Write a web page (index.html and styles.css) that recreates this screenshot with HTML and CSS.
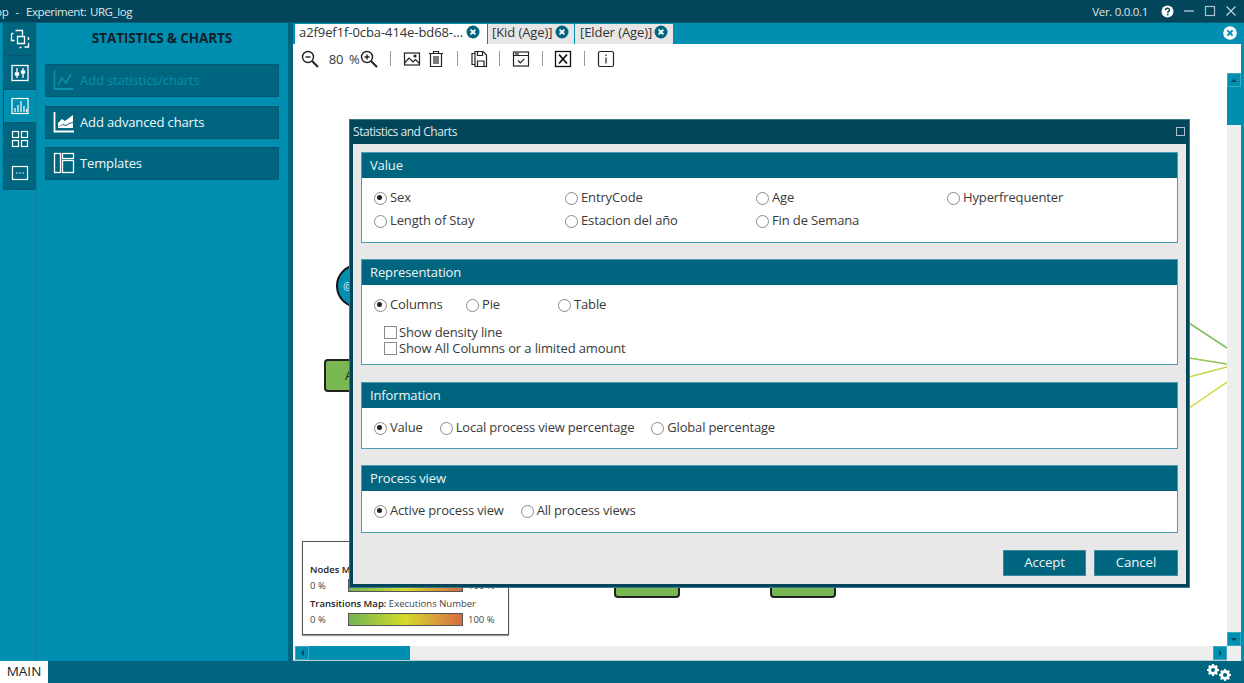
FILE: index.html
```html
<!DOCTYPE html>
<html lang="en">
<head>
<meta charset="utf-8">
<title>Statistics and Charts</title>
<link rel="stylesheet" href="styles.css">
</head>
<body>
<div class="app">
  <header class="titlebar">
    <div class="app-title">pp&nbsp; -&nbsp; Experiment: URG_log</div>
    <div class="win-tools">
      <span class="version">Ver. 0.0.0.1</span>
      <svg class="help" width="13" height="13" viewBox="0 0 13 13"><circle cx="6.5" cy="6.5" r="6" fill="#fff"/><path d="M4.6 5.2c0-2.5 3.9-2.4 3.9-.2 0 1.500-1.800 1.400-1.800 2.900" fill="none" stroke="#03455a" stroke-width="1.500"/><rect x="5.900" y="8.800" width="1.600" height="1.600" fill="#03455a"/></svg>
      <svg width="12" height="12" viewBox="0 0 12 12"><path d="M1 6h10" stroke="#c4d4da" stroke-width="1.200"/></svg>
      <svg width="12" height="12" viewBox="0 0 12 12"><rect x="1.500" y="1.500" width="9" height="9" fill="none" stroke="#a9c2cb" stroke-width="1.200"/></svg>
      <svg width="12" height="12" viewBox="0 0 12 12"><path d="M1.500 1.500l9 9M10.500 1.500l-9 9" stroke="#c4d4da" stroke-width="1.200"/></svg>
    </div>
  </header>
  <div class="main">
    <nav class="rail">
      <button class="rail-btn"><svg width="20" height="20" viewBox="0 0 20 20" fill="none" stroke="#fff" stroke-width="1.300"><path d="M1.500 4.500h2M5.500 1.500h7v5M1.500 4.500v7h3M7.500 7.500h7v7h-7zM18.500 8v3M18.500 14v4h-4M9.500 18.500h2"/></svg></button>
      <button class="rail-btn"><svg width="20" height="20" viewBox="0 0 20 20" fill="none" stroke="#fff" stroke-width="1.300"><rect x="2" y="2.500" width="16" height="15"/><path d="M7 5v10M13 5v10"/><rect x="5.500" y="10" width="3" height="2" fill="#fff"/><rect x="11.500" y="8" width="3" height="2" fill="#fff"/></svg></button>
      <button class="rail-btn active"><svg width="20" height="20" viewBox="0 0 20 20" fill="none" stroke="#fff" stroke-width="1.200"><rect x="2" y="2.500" width="16" height="15"/><path d="M5 16v-4M8 16V9M11 16V5M14 16v-6M16.500 16v-3"/></svg></button>
      <button class="rail-btn"><svg width="20" height="20" viewBox="0 0 20 20" fill="none" stroke="#fff" stroke-width="1.200"><rect x="2.500" y="2.500" width="6" height="6"/><rect x="11.500" y="2.500" width="6" height="6"/><rect x="2.500" y="11.500" width="6" height="6"/><rect x="11.500" y="11.500" width="6" height="6"/></svg></button>
      <button class="rail-btn"><svg width="20" height="20" viewBox="0 0 20 20" fill="none" stroke="#fff" stroke-width="1.200"><rect x="2.500" y="3.500" width="15" height="13"/><path d="M6 10h1.500M9.300 10h1.500M12.600 10h1.500"/></svg></button>
    </nav>
    <aside class="side">
      <h1 class="side-title">STATISTICS &amp; CHARTS</h1>
      <button class="side-btn disabled"><svg width="22" height="22" viewBox="0 0 22 22" fill="none" stroke="#0b8dab" stroke-width="1.800"><path d="M1.500 1v19h19"/><path d="M5 16l4-7 4 5 5-9" stroke-width="1.600"/></svg><span>Add statistics/charts</span></button>
      <button class="side-btn"><svg width="22" height="22" viewBox="0 0 22 22"><path d="M1.500 1v19.500H21" fill="none" stroke="#fff" stroke-width="1.800"/><path d="M5 12l4-4 3 2 4-3 4-3v7l-4 1-3 2-3-1-5 3z" fill="#fff"/><path d="M5 16l5-2 3 1 3-2 4-1v5H5z" fill="#fff"/></svg><span>Add advanced charts</span></button>
      <button class="side-btn"><svg width="22" height="22" viewBox="0 0 22 22" fill="none" stroke="#fff" stroke-width="1.300"><rect x="1.500" y="1.500" width="6" height="19"/><rect x="9.500" y="1.500" width="11" height="5"/><rect x="9.500" y="8.500" width="11" height="12"/></svg><span>Templates</span></button>
    </aside>
    <div class="splitter"></div>
    <section class="content">
      <div class="tabs">
        <div class="tab current"><span>a2f9ef1f-0cba-414e-bd68-...</span><svg class="tab-x" viewBox="0 0 14 14"><circle cx="7" cy="7" r="6.500" fill="#006680"/><path d="M4.600 4.600l4.800 4.800M9.400 4.600l-4.800 4.800" stroke="#fff" stroke-width="1.800"/></svg></div>
        <div class="tab kid"><span>[Kid (Age)]</span><svg class="tab-x" viewBox="0 0 14 14"><circle cx="7" cy="7" r="6.500" fill="#006680"/><path d="M4.600 4.600l4.800 4.800M9.400 4.600l-4.800 4.800" stroke="#fff" stroke-width="1.800"/></svg></div>
        <div class="tab elder"><span>[Elder (Age)]</span><svg class="tab-x" viewBox="0 0 14 14"><circle cx="7" cy="7" r="6.500" fill="#006680"/><path d="M4.600 4.600l4.800 4.800M9.400 4.600l-4.800 4.800" stroke="#fff" stroke-width="1.800"/></svg></div>
        <svg class="tabs-close" width="14" height="14" viewBox="0 0 14 14"><circle cx="7" cy="7" r="6.800" fill="#fff"/><path d="M4.400 4.400l5.200 5.200M9.600 4.400l-5.200 5.200" stroke="#008fb0" stroke-width="2"/></svg>
      </div>
      <div class="toolbar">
        <svg class="tool" viewBox="0 0 20 20" fill="none" stroke="#222" stroke-width="1.400"><circle cx="8" cy="8" r="5.500"/><path d="M5.500 8h5"/><path d="M12 12l6 6" stroke-width="2"/></svg>
        <span class="zoom-value">80</span><span class="zoom-unit">%</span>
        <svg class="tool zoom-in" viewBox="0 0 20 20" fill="none" stroke="#222" stroke-width="1.400"><circle cx="8" cy="8" r="5.500"/><path d="M5.500 8h5M8 5.500v5"/><path d="M12 12l6 6" stroke-width="2"/></svg>
        <i class="sep"></i>
        <div class="tool-pair">
          <svg class="tool" viewBox="0 0 20 20" fill="none" stroke="#222" stroke-width="1.200"><rect x="2.500" y="4" width="15" height="12"/><path d="M2.500 14l4.500-5 4 4 2.500-2.500 4 4"/><circle cx="13" cy="7" r="1" fill="#222"/></svg>
          <svg class="tool" viewBox="0 0 20 20" fill="none" stroke="#222" stroke-width="1.200"><path d="M3 4.500h14M7.500 4.500V2.500h5v2M4.500 4.500v13h11v-13M8 7v8M10 7v8M12 7v8"/></svg>
        </div>
        <i class="sep"></i>
        <svg class="tool" viewBox="0 0 20 20" fill="none" stroke="#222" stroke-width="1.200"><path d="M5.500 4.500h-2.500v11h3M6 2.500h8l3.500 3.500v11.500H6z"/><path d="M8.500 2.500v4h5v-4M8.500 17.500v-5.500h6.500v5.500"/></svg>
        <i class="sep"></i>
        <svg class="tool" viewBox="0 0 20 20" fill="none" stroke="#222" stroke-width="1.200"><rect x="2.500" y="3" width="15" height="14"/><path d="M2.500 6.500h15M4 4.800h4" /><path d="M7 11.500l2.300 2.300 4-4"/></svg>
        <i class="sep"></i>
        <svg class="tool" viewBox="0 0 20 20" fill="none" stroke="#111" stroke-width="1.300"><rect x="2.500" y="2.500" width="15" height="15"/><path d="M6 5.500l8 9M14 5.500l-8 9" stroke-width="1.800"/></svg>
        <i class="sep"></i>
        <svg class="tool" viewBox="0 0 20 20" fill="none" stroke="#222" stroke-width="1.200"><rect x="2.500" y="2.500" width="15" height="15" rx="1.500"/><path d="M10 8.500v6M10 5.500v1.500"/></svg>
      </div>
      <div class="viewport">
        <div class="canvas">
          <svg class="edges" width="934" height="572" viewBox="0 0 934 572" fill="none" stroke-width="1.500">
            <path d="M896 250L934 275" stroke="#82bd5c"/>
            <path d="M896 285L934 291" stroke="#8fc456"/>
            <path d="M896 304L934 294" stroke="#c8d644"/>
            <path d="M896 335L934 309" stroke="#cfd83e"/>
          </svg>
          <div class="node-circle">@</div>
          <div class="node-box first">A</div>
          <div class="node-box small a"></div>
          <div class="node-box small b"></div>
          <div class="legend">
            <div class="legend-line top"><b>Nodes Map:</b></div>
            <div class="legend-row"><span>0 %</span><i class="gradient"></i><span>100 %</span></div>
            <div class="legend-line"><b>Transitions Map:</b> Executions Number</div>
            <div class="legend-row"><span>0 %</span><i class="gradient"></i><span>100 %</span></div>
          </div>
        </div>
        <div class="vscroll">
          <span class="sb-btn"><i class="arrow up"></i></span>
          <span class="v-thumb"></span>
          <span class="v-fill"></span>
          <span class="sb-btn"><i class="arrow down"></i></span>
        </div>
        <div class="hscroll">
          <span class="sb-btn"><i class="arrow left"></i></span>
          <span class="h-thumb"></span>
          <span class="h-fill"></span>
          <span class="sb-btn"><i class="arrow right"></i></span>
        </div>
      </div>
    </section>
  </div>
  <footer class="statusbar">
    <div class="main-tab">MAIN</div>
    <svg class="gears" width="26" height="19" viewBox="0 0 26 19" fill="#fff">
      <g><circle cx="7" cy="7" r="3.600" fill="none" stroke="#fff" stroke-width="2.600"/><path d="M7 1v12M1 7h12M2.800 2.800l8.400 8.400M11.200 2.800l-8.400 8.400" stroke="#fff" stroke-width="2"/><circle cx="7" cy="7" r="2" fill="#006680"/></g>
      <g><circle cx="19" cy="12" r="3.600" fill="none" stroke="#fff" stroke-width="2.600"/><path d="M19 6v12M13 12h12M14.800 7.800l8.400 8.400M23.200 7.800l-8.400 8.400" stroke="#fff" stroke-width="2"/><circle cx="19" cy="12" r="2" fill="#006680"/></g>
    </svg>
  </footer>

  <div class="dialog">
    <div class="dialog-title"><span>Statistics and Charts</span><i class="dialog-max"></i></div>
    <div class="dialog-body">
      <section class="group value">
        <h2>Value</h2>
        <div class="group-body grid4">
          <label class="radio on">Sex</label><label class="radio">EntryCode</label><label class="radio">Age</label><label class="radio">Hyperfrequenter</label>
          <label class="radio">Length of Stay</label><label class="radio">Estacion del año</label><label class="radio">Fin de Semana</label>
        </div>
      </section>
      <section class="group representation">
        <h2>Representation</h2>
        <div class="group-body">
          <div class="grid3"><label class="radio on">Columns</label><label class="radio">Pie</label><label class="radio">Table</label></div>
          <div class="checks"><label class="check">Show density line</label><label class="check">Show All Columns or a limited amount</label></div>
        </div>
      </section>
      <section class="group information">
        <h2>Information</h2>
        <div class="group-body inline"><label class="radio on">Value</label><label class="radio">Local process view percentage</label><label class="radio">Global percentage</label></div>
      </section>
      <section class="group process">
        <h2>Process view</h2>
        <div class="group-body inline"><label class="radio on">Active process view</label><label class="radio">All process views</label></div>
      </section>
      <div class="dialog-actions"><button class="accept">Accept</button><button>Cancel</button></div>
    </div>
  </div>
</div>
</body>
</html>
```
FILE: styles.css
```css
* { box-sizing: border-box; }
html, body { margin: 0; padding: 0; }
body { font-family: "Open Sans", "Noto Sans", "Liberation Sans", sans-serif; font-size: 13px; letter-spacing: -0.13px; color: #3a3a3a; overflow: hidden; }
button { font: inherit; letter-spacing: inherit; cursor: default; }
.app { position: relative; width: 1244px; height: 683px; display: flex; flex-direction: column; overflow: hidden; background: #008fb0; }

.titlebar { height: 23px; flex: none; background: #03455a; color: #dfe9ec; display: flex; align-items: center; justify-content: space-between; overflow: hidden; border-bottom: 1px solid #0a5d73; }
.app-title { margin-left: -5px; white-space: nowrap; font-size: 11.500px; letter-spacing: -0.4px; word-spacing: 1px; }
.win-tools { display: flex; align-items: center; gap: 9px; padding-right: 7px; }
.version { font-size: 11.500px; letter-spacing: -0.3px; margin-right: 4px; }

.main { flex: 1; min-height: 0; display: flex; }
.rail { width: 37px; flex: none; padding-left: 3px; border-right: 1px solid #0a7e9a; background: #008fb0; }
.rail-btn { display: flex; align-items: center; justify-content: center; width: 33px; height: 33.400px; padding: 0; background: #006680; border: 0; border-bottom: 1px solid #05586f; border-left: 1px solid #05586f; }
.rail-btn.active { background: #008fb0; }
.side { width: 251px; flex: none; padding: 0 9px 0 8px; background: #008fb0; }
.side-title { margin: 6px 0 16px; height: 19px; line-height: 19px; font-size: 13.500px; font-weight: 700; letter-spacing: -0.1px; text-align: center; color: #10202a; }
.side-btn { display: flex; align-items: center; gap: 5px; width: 234px; height: 33px; margin-bottom: 8.500px; padding: 0 7px 1px; background: #006680; color: #f2f7f8; border: 1px solid #05586f; text-align: left; }
.side-btn.disabled { color: #0b8dab; }
.splitter { width: 5px; flex: none; background: #006680; }

.content { width: 951px; flex: none; display: flex; flex-direction: column; background: #fff; border-right: 3px solid #008fb0; }
.tabs { height: 21px; flex: none; display: flex; align-items: flex-end; background: #008fb0; padding-left: 2px; position: relative; }
.tab { display: flex; align-items: center; justify-content: space-between; height: 20px; padding-bottom: 4px; white-space: nowrap; color: #333; background: #e6e6e6; letter-spacing: -0.08px; }
.tab.current { width: 192px; margin-right: 1px; padding-left: 4px; padding-right: 7px; background: #fff; }
.tab.kid { width: 86px; margin-right: 1px; padding-left: 4px; padding-right: 5px; }
.tab.elder { width: 98px; padding-left: 5px; padding-right: 5px; }
.tab-x { width: 14px; height: 14px; flex: none; }
.tabs-close { position: absolute; right: 4px; top: 3px; }

.toolbar { height: 29px; flex: none; display: flex; align-items: center; gap: 10.700px; padding-left: 7px; background: #fff; }
.tool { width: 20px; height: 20px; flex: none; }
.tool-pair { display: flex; gap: 4.500px; }
.zoom-value { margin-left: -2px; }
.zoom-unit { margin-left: -5px; }
.zoom-in { margin-left: -11px; }
.sep { width: 1px; height: 15px; background: #9a9a9a; flex: none; }

.viewport { flex: 1; min-height: 0; display: grid; grid-template-columns: 1fr 14px; grid-template-rows: 1fr 15px; background: #eee; }
.canvas { position: relative; overflow: hidden; background: #fff; }
.edges { position: absolute; left: 0; top: 0; }
.node-circle { position: absolute; left: 43px; top: 191px; width: 44px; height: 44px; border-radius: 50%; background: #008fb0; border: 2px solid #111; color: #cfeaf1; line-height: 40px; padding-left: 5px; font-size: 11px; }
.node-box { position: absolute; background: #78b752; border: 2px solid #222; border-radius: 4px; color: #222; }
.node-box.first { left: 31px; top: 286px; width: 80px; height: 33px; line-height: 29px; padding-left: 19px; }
.node-box.small { top: 500px; width: 66px; height: 25px; }
.node-box.a { left: 321px; }
.node-box.b { left: 477px; }
.legend { position: absolute; left: 9px; top: 468px; width: 207px; height: 94px; border: 1px solid #555; background: #fff; box-shadow: 0 1px 1px #999; padding: 0 7px; font-size: 9.500px; letter-spacing: 0; color: #444; }
.legend b { font-weight: 600; color: #222; }
.legend-line { height: 16px; line-height: 16px; margin-top: 3px; white-space: nowrap; }
.legend-line.top { margin-top: 20px; }
.legend-row { display: flex; align-items: center; height: 15px; }
.legend-row span:first-child { width: 38px; }
.legend-row span:last-child { margin-left: 5px; }
.gradient { display: block; width: 115px; height: 13px; border: 1px solid #555; background: linear-gradient(90deg, #72b650 0%, #d6da2a 50%, #d96a42 100%); }

.vscroll { display: flex; flex-direction: column; background: #eee; }
.hscroll { display: flex; background: #eee; padding-left: 2px; grid-column: 1; border-bottom: 1px solid #b9cdd3; }
.sb-btn { display: flex; align-items: center; justify-content: center; width: 14px; height: 14px; flex: none; background: #008fb0; border: 1px solid #3fa9c2; }
.v-thumb { height: 38px; background: #008fb0; flex: none; }
.v-fill, .h-fill { flex: 1; }
.h-thumb { width: 101px; background: #008fb0; flex: none; }
.arrow { width: 0; height: 0; display: block; border: 3px solid transparent; }
.arrow.up { border-bottom-color: #03455a; margin-top: -3px; }
.arrow.down { border-top-color: #03455a; margin-top: 3px; }
.arrow.left { border-right-color: #03455a; margin-left: -3px; }
.arrow.right { border-left-color: #03455a; margin-left: 3px; }

.statusbar { height: 22px; flex: none; display: flex; justify-content: space-between; background: #006680; padding-right: 12px; }
.main-tab { width: 48px; background: #fff; color: #222; text-align: center; line-height: 21px; font-size: 13.500px; letter-spacing: 0; }
.gears { margin-top: 2px; }

.dialog { position: absolute; left: 349px; top: 119px; width: 841px; height: 469px; background: #03455a; border: 1px solid #38788c; padding: 0 3px 3px 3px; display: flex; flex-direction: column; }
.dialog-title { height: 24px; flex: none; display: flex; align-items: center; justify-content: space-between; color: #dfe9ec; font-size: 12px; letter-spacing: -0.45px; padding: 0 1px 1px 0; }
.dialog-max { width: 9px; height: 9px; border: 1px solid #a9c2cb; display: block; }
.dialog-body { flex: 1; min-height: 0; background: #e8e8e8; padding: 8px 8px 0 8px; }
.group { background: #fff; border: 1px solid #4d9db2; margin-bottom: 16px; }
.group h2 { margin: 0; height: 25px; line-height: 25px; background: #006680; color: #eef5f7; font-size: 13px; font-weight: 400; padding-left: 8px; }
.group.value { height: 91px; }
.group.representation { height: 106px; margin-bottom: 17px; }
.group.information { height: 67px; margin-bottom: 16px; }
.group.process { height: 68px; margin-bottom: 17px; }
.group-body { padding: 8px 0 0 12px; }
.radio { position: relative; display: block; height: 23px; line-height: 23px; padding-left: 16px; white-space: nowrap; }
.radio::before { content: ""; position: absolute; left: 0; top: 6px; width: 11px; height: 11px; border: 1px solid #8a8a8a; border-radius: 50%; background: #fff; }
.radio.on::after { content: ""; position: absolute; left: 3px; top: 9px; width: 5px; height: 5px; border-radius: 50%; background: #222; }
.grid4 { display: grid; grid-template-columns: repeat(4, 191px); }
.grid3 { display: grid; grid-template-columns: repeat(3, 92px); }
.inline { display: flex; gap: 17px; letter-spacing: -0.18px; }
.checks { padding: 8px 0 0 10px; }
.check { position: relative; display: block; height: 16px; line-height: 16px; padding-left: 15px; white-space: nowrap; }
.check::before { content: ""; position: absolute; left: 0; top: 2px; width: 11px; height: 11px; border: 1px solid #8a8a8a; background: #fff; }
.dialog-actions { display: flex; justify-content: flex-end; gap: 8px; }
.dialog-actions button { width: 84px; height: 26px; padding: 0 0 2px; background: #006680; color: #eef5f7; border: 1px solid #3b8aa0; font-size: 13.300px; }
.dialog-actions .accept { width: 83px; }
```
